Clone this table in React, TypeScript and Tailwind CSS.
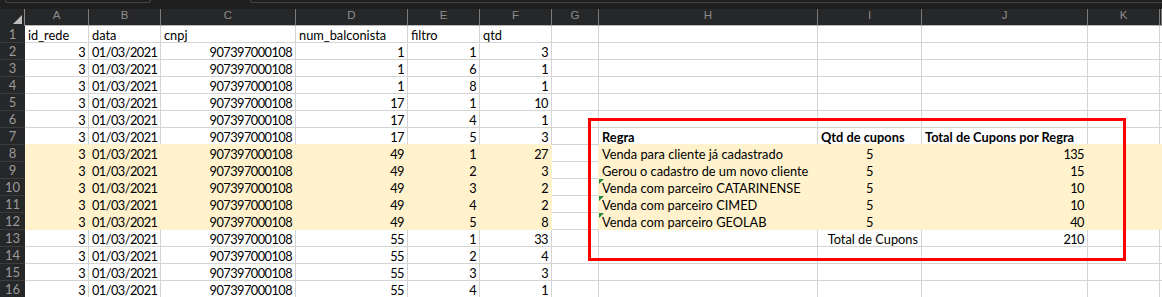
import React from 'react'

type Cell = {
  text: string
  align?: 'l' | 'r' | 'c'
  bold?: boolean
  flag?: boolean
}

const COLS = [
  { label: 'A', w: 'w-[64px]' },
  { label: 'B', w: 'w-[72px]' },
  { label: 'C', w: 'w-[135px]' },
  { label: 'D', w: 'w-[112px]' },
  { label: 'E', w: 'w-[72px]' },
  { label: 'F', w: 'w-[72px]' },
  { label: 'G', w: 'w-[47px]' },
  { label: 'H', w: 'w-[219px]' },
  { label: 'I', w: 'w-[104px]' },
  { label: 'J', w: 'w-[166px]' },
  { label: 'K', w: 'w-[72px]' },
  { label: '', w: 'flex-1' },
]

const base = [
  [1, 1, 3],
  [1, 6, 1],
  [1, 8, 1],
  [17, 1, 10],
  [17, 4, 1],
  [17, 5, 3],
  [49, 1, 27],
  [49, 2, 3],
  [49, 3, 2],
  [49, 4, 2],
  [49, 5, 8],
  [55, 1, 33],
  [55, 2, 4],
  [55, 3, 3],
  [55, 4, 1],
]

const rules: Record<number, [string, string, string, boolean?]> = {
  8: ['Venda para cliente já cadastrado', '5', '135'],
  9: ['Gerou o cadastro de um novo cliente', '5', '15'],
  10: ['Venda com parceiro CATARINENSE', '5', '10', true],
  11: ['Venda com parceiro CIMED', '5', '10', true],
  12: ['Venda com parceiro GEOLAB', '5', '40', true],
}

const cellAt = (r: number, c: number): Cell | undefined => {
  if (r === 1) {
    const heads = ['id_rede', 'data', 'cnpj', 'num_balconista', 'filtro', 'qtd']
    return heads[c] ? { text: heads[c], align: 'l' } : undefined
  }
  if (c <= 5) {
    const row = base[r - 2]
    if (!row) return undefined
    const vals = ['3', '01/03/2021', '907397000108', String(row[0]), String(row[1]), String(row[2])]
    return { text: vals[c], align: c === 1 ? 'l' : 'r' }
  }
  if (r === 7) {
    if (c === 7) return { text: 'Regra', align: 'l', bold: true }
    if (c === 8) return { text: 'Qtd de cupons', align: 'l', bold: true }
    if (c === 9) return { text: 'Total de Cupons por Regra', align: 'l', bold: true }
  }
  if (rules[r]) {
    const [rule, qtd, total, flag] = rules[r]
    if (c === 7) return { text: rule, align: 'l', flag }
    if (c === 8) return { text: qtd, align: 'c' }
    if (c === 9) return { text: total, align: 'r' }
  }
  if (r === 13) {
    if (c === 8) return { text: 'Total de Cupons', align: 'r' }
    if (c === 9) return { text: '210', align: 'r' }
  }
  return undefined
}

const filled = (r: number, c: number) =>
  r >= 8 && r <= 12 && (c <= 5 || c >= 7)

const SheetCell = ({ r, c }: { r: number; c: number }) => {
  const cell = cellAt(r, c)
  const isFilled = filled(r, c)
  const rightYellow = isFilled || filled(r, c + 1)
  const bottomYellow = isFilled || filled(r + 1, c)
  const numeric = cell ? /^[\d/]+$/.test(cell.text) : false
  const align =
    cell?.align === 'r'
      ? 'justify-end'
      : cell?.align === 'c'
        ? 'justify-center'
        : 'justify-start'

  return (
    <div
      className={`relative h-[17px] shrink-0 flex items-center px-[3px] whitespace-nowrap ${COLS[c].w} ${align} ${
        isFilled ? 'bg-[#fff2cc]' : 'bg-white'
      } border-r border-b ${rightYellow ? 'border-r-[#fff2cc]' : 'border-r-[#d4d4d4]'} ${
        bottomYellow ? 'border-b-[#fff2cc]' : 'border-b-[#d4d4d4]'
      }`}
    >
      {cell?.flag && (
        <span className="absolute left-0 top-0 w-0 h-0 border-t-[5px] border-r-[5px] border-t-[#1e8a3c] border-r-transparent" />
      )}
      {cell && (
        <span
          className={`leading-[17px] pt-[2px] ${cell.bold ? 'font-bold' : ''} ${
            numeric ? 'tracking-[-0.55px]' : ''
          }`}
        >
          {cell.text}
        </span>
      )}
    </div>
  )
}

export default function App() {
  const rows = Array.from({ length: 16 }, (_, i) => i + 1)

  return (
    <div className="w-[1162px] h-[297px] overflow-hidden bg-[#1f1f1f] font-['Lato',_'Liberation_Sans',_sans-serif] text-[12.8px] text-black">
      {/* formula area strip */}
      <div className="h-[9px] flex">
        <div className="ml-[5px] w-[146px] h-[3px] border-b border-x border-[#444] rounded-b-[3px]" />
        <div className="ml-[99px] flex-1 h-[3px] border-b border-l border-[#444] rounded-bl-[3px]" />
      </div>

      {/* column headers */}
      <div className="flex h-[17px] bg-[#262729] font-['Liberation_Sans',_sans-serif] text-[11.5px] text-[#8d8d8d]">
        <div className="relative w-[25px] shrink-0 border-r border-[#8a8a8a]">
          <svg className="absolute right-[2px] bottom-[2px]" width="9" height="9" viewBox="0 0 9 9">
            <path d="M9 0 L9 9 L0 9 Z" fill="#bdbdbd" />
          </svg>
        </div>
        {COLS.map((col, i) => (
          <div
            key={i}
            className={`${col.w} shrink-0 flex items-end justify-center pb-[1px] border-r border-[#7a7a7a] border-b border-b-[#b8b8b8]`}
          >
            {col.label}
          </div>
        ))}
      </div>

      {/* grid */}
      <div className="relative">
        {rows.map((r) => (
          <div key={r} className="flex">
            <div className="w-[25px] h-[17px] shrink-0 flex items-center justify-center bg-[#262729] border-b border-[#3c3c3c] text-[13px] text-[#9a9a9a] pt-[1px]">
              {r}
            </div>
            {COLS.map((_, c) => (
              <SheetCell key={c} r={r} c={c} />
            ))}
          </div>
        ))}

        {/* red highlight box */}
        <div className="absolute left-[588px] top-[92px] w-[538px] h-[143px] border-[3px] border-[#ff0000] pointer-events-none" />
      </div>
    </div>
  )
}
